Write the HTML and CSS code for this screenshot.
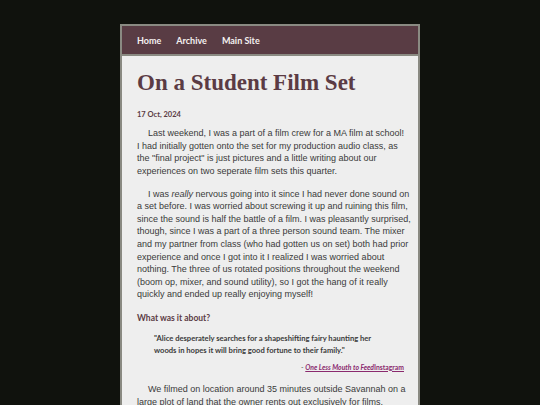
FILE: index.html
```html
<!DOCTYPE html>
<html lang="en">
<head>
<meta charset="utf-8">
<title>On a Student Film Set</title>
<link rel="stylesheet" href="styles.css">
</head>
<body>
<div class="page">
  <nav class="nav">
    <a href="#">Home</a>
    <a href="#">Archive</a>
    <a href="#">Main Site</a>
  </nav>
  <main class="content">
    <h1 class="title">On a Student Film Set</h1>
    <p class="date">17 Oct, 2024</p>
    <p class="para">Last weekend, I was a part of a film crew for a MA film at school!<br>I had initially gotten onto the set for my production audio class, as the&nbsp;"final project" is just pictures and a little writing about our experiences on two seperate film sets this quarter.</p>
    <p class="para">I was <em>really</em> nervous going into it since I had never done sound on a set before. I was worried about screwing it up and ruining this film, since the sound is half the battle of a film. I was pleasantly surprised, though, since I was a part of a three person sound team. The mixer and my partner from class (who had gotten us on set) both had prior experience and once I got into it I realized I was worried about nothing. The three of us rotated positions throughout the weekend (boom op, mixer, and sound utility), so I got the hang of it really quickly and ended up really enjoying myself!</p>
    <h2 class="subhead">What was it about?</h2>
    <blockquote class="quote">"Alice desperately searches for a shapeshifting fairy haunting her woods in hopes it will bring good fortune to their family."</blockquote>
    <p class="cite">- <a href="#"><em>One Less Mouth to Feed</em>Instagram</a></p>
    <p class="para">We filmed on location around 35 minutes outside Savannah on a large plot of land that the owner rents out exclusively for films.</p>
  </main>
</div>
</body>
</html>
```
FILE: styles.css
```css
html, body {
  margin: 0;
  padding: 0;
}
body {
  background: #10120d;
  font-family: "Liberation Sans", Arial, sans-serif;
  height: 405px;
  overflow: hidden;
}
.page {
  width: 296px;
  margin: 24px auto 0;
  border: 2px solid #8a8a82;
  border-bottom: none;
  background: #eeeeee;
}
.nav {
  background: #593c44;
  height: 28px;
  display: flex;
  align-items: center;
  gap: 15px;
  padding: 0 15px;
  border-bottom: 2px solid #8a8a82;
}
.nav a {
  color: #f4f0f0;
  text-decoration: none;
  font-family: Lato, sans-serif;
  font-weight: 700;
  font-size: 9px;
}
.content {
  padding: 12px 4px 20px 15px;
}
.title {
  margin: 0;
  font-family: "Liberation Serif", serif;
  font-weight: 700;
  font-size: 23px;
  line-height: 30px;
  color: #5b3b44;
}
.date {
  margin: 12px 0 0;
  font-family: Lato, sans-serif;
  font-weight: 700;
  font-size: 7.5px;
  line-height: 10px;
  color: #5b3b44;
}
.para {
  margin: 7px 0 0;
  font-size: 9px;
  line-height: 12.6px;
  color: #3a3a3a;
  text-indent: 11px;
}
.para + .para {
  margin-top: 10.3px;
}
.subhead {
  margin: 10.5px 0 0;
  font-family: Lato, sans-serif;
  font-weight: 700;
  font-size: 8.5px;
  line-height: 12px;
  color: #5b3b44;
}
.quote {
  margin: 8px 30px 0 17px;
  font-family: Lato, sans-serif;
  font-weight: 700;
  font-size: 7.6px;
  line-height: 12px;
  color: #3a3a3a;
}
.cite {
  margin: 6px 0 0;
  text-align: right;
  font-family: Lato, sans-serif;
  font-size: 6.8px;
  line-height: 10px;
  color: #555;
  padding-right: 10px;
}
.cite a {
  color: #8a2a6e;
  font-weight: 700;
}
.cite em {
  font-style: italic;
}
.cite + .para {
  margin-top: 11.5px;
}
```
